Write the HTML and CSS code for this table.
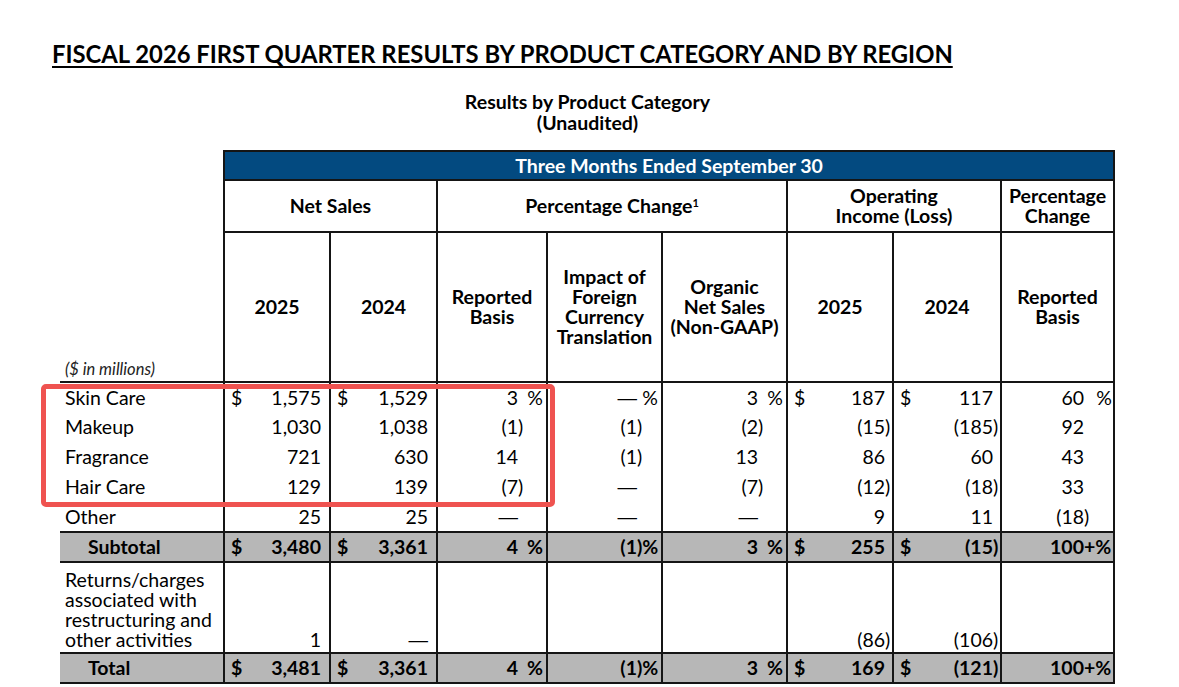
FILE: index.html
```html
<!DOCTYPE html>
<html lang="en">
<head>
<meta charset="utf-8">
<title>Fiscal 2026 First Quarter Results</title>
<link rel="stylesheet" href="styles.css">
</head>
<body>
<div class="page">
  <h1 class="title">FISCAL 2026 FIRST QUARTER RESULTS BY PRODUCT CATEGORY AND BY REGION</h1>
  <div class="report">
    <div class="subtitle">Results by Product Category<br>(Unaudited)</div>
    <table class="results">
      <colgroup>
        <col class="c-label"><col class="c-ns"><col class="c-ns2"><col class="c-rep"><col class="c-fx"><col class="c-org"><col class="c-oi"><col class="c-oi2"><col class="c-pct">
      </colgroup>
      <thead>
        <tr class="band">
          <th class="lbl"></th>
          <th colspan="8" class="band-cell">Three Months Ended September 30</th>
        </tr>
        <tr class="grp">
          <th class="lbl"></th>
          <th colspan="2">Net Sales</th>
          <th colspan="3">Percentage Change<sup>1</sup></th>
          <th colspan="2">Operating<br>Income (Loss)</th>
          <th>Percentage<br>Change</th>
        </tr>
        <tr class="sub">
          <th class="lbl unit">($ in millions)</th>
          <th>2025</th>
          <th>2024</th>
          <th>Reported<br>Basis</th>
          <th>Impact of<br>Foreign<br>Currency<br>Translation</th>
          <th>Organic<br>Net Sales<br>(Non-GAAP)</th>
          <th>2025</th>
          <th>2024</th>
          <th>Reported<br>Basis</th>
        </tr>
      </thead>
      <tbody>
        <tr class="row">
          <td class="lbl">Skin Care</td>
          <td class="n w8"><span class="cur">$</span>1,575<span class="s"></span></td>
          <td class="n w8"><span class="cur">$</span>1,529<span class="s"></span></td>
          <td class="n w29">3<span class="s r">%</span></td>
          <td class="n w25"><span class="d">—</span><span class="s r">%</span></td>
          <td class="n w29">3<span class="s r">%</span></td>
          <td class="n w9"><span class="cur">$</span>187<span class="s"></span></td>
          <td class="n w9"><span class="cur">$</span>117<span class="s"></span></td>
          <td class="n w30">60<span class="s r">%</span></td>
        </tr>
        <tr class="row">
          <td class="lbl">Makeup</td>
          <td class="n w8">1,030<span class="s"></span></td>
          <td class="n w8">1,038<span class="s"></span></td>
          <td class="n w29">(1<span class="s">)</span></td>
          <td class="n w25">(1<span class="s">)</span></td>
          <td class="n w29">(2<span class="s">)</span></td>
          <td class="n w9">(15<span class="s">)</span></td>
          <td class="n w9">(185<span class="s">)</span></td>
          <td class="n w30">92<span class="s"></span></td>
        </tr>
        <tr class="row">
          <td class="lbl">Fragrance</td>
          <td class="n w8">721<span class="s"></span></td>
          <td class="n w8">630<span class="s"></span></td>
          <td class="n w29">14<span class="s"></span></td>
          <td class="n w25">(1<span class="s">)</span></td>
          <td class="n w29">13<span class="s"></span></td>
          <td class="n w9">86<span class="s"></span></td>
          <td class="n w9">60<span class="s"></span></td>
          <td class="n w30">43<span class="s"></span></td>
        </tr>
        <tr class="row">
          <td class="lbl">Hair Care</td>
          <td class="n w8">129<span class="s"></span></td>
          <td class="n w8">139<span class="s"></span></td>
          <td class="n w29">(7<span class="s">)</span></td>
          <td class="n w25"><span class="d">—</span><span class="s"></span></td>
          <td class="n w29">(7<span class="s">)</span></td>
          <td class="n w9">(12<span class="s">)</span></td>
          <td class="n w9">(18<span class="s">)</span></td>
          <td class="n w30">33<span class="s"></span></td>
        </tr>
        <tr class="row">
          <td class="lbl">Other</td>
          <td class="n w8">25<span class="s"></span></td>
          <td class="n w8">25<span class="s"></span></td>
          <td class="n w29"><span class="d">—</span><span class="s"></span></td>
          <td class="n w25"><span class="d">—</span><span class="s"></span></td>
          <td class="n w29"><span class="d">—</span><span class="s"></span></td>
          <td class="n w9">9<span class="s"></span></td>
          <td class="n w9">11<span class="s"></span></td>
          <td class="n w30">(18<span class="s">)</span></td>
        </tr>
        <tr class="tot">
          <td class="lbl">Subtotal</td>
          <td class="n w8"><span class="cur">$</span>3,480<span class="s"></span></td>
          <td class="n w8"><span class="cur">$</span>3,361<span class="s"></span></td>
          <td class="n w29">4<span class="s r">%</span></td>
          <td class="n w25">(1<span class="s">)%</span></td>
          <td class="n w29">3<span class="s r">%</span></td>
          <td class="n w9"><span class="cur">$</span>255<span class="s"></span></td>
          <td class="n w9"><span class="cur">$</span>(15<span class="s">)</span></td>
          <td class="n w30">100<span class="s">+%</span></td>
        </tr>
        <tr class="ret">
          <td class="lbl"><div class="ret-label">Returns/charges<br>associated with<br>restructuring and<br>other activities</div></td>
          <td class="n w8">1<span class="s"></span></td>
          <td class="n w8"><span class="d">—</span><span class="s"></span></td>
          <td class="n w29"></td>
          <td class="n w25"></td>
          <td class="n w29"></td>
          <td class="n w9">(86<span class="s">)</span></td>
          <td class="n w9">(106<span class="s">)</span></td>
          <td class="n w30"></td>
        </tr>
        <tr class="tot">
          <td class="lbl">Total</td>
          <td class="n w8"><span class="cur">$</span>3,481<span class="s"></span></td>
          <td class="n w8"><span class="cur">$</span>3,361<span class="s"></span></td>
          <td class="n w29">4<span class="s r">%</span></td>
          <td class="n w25">(1<span class="s">)%</span></td>
          <td class="n w29">3<span class="s r">%</span></td>
          <td class="n w9"><span class="cur">$</span>169<span class="s"></span></td>
          <td class="n w9"><span class="cur">$</span>(121<span class="s">)</span></td>
          <td class="n w30">100<span class="s">+%</span></td>
        </tr>
      </tbody>
    </table>
    <div class="highlight"></div>
  </div>
</div>
</body>
</html>
```

FILE: styles.css
```css
* { box-sizing: border-box; }

body {
  margin: 0;
  background: #fff;
  color: #000;
  font-family: Lato, "Open Sans", "Liberation Sans", sans-serif;
}

.page {
  padding: 40px 0 0 52px;
}

.title {
  margin: 0;
  font-size: 23.8px;
  line-height: 28px;
  font-weight: 700;
  text-decoration: underline;
  text-decoration-thickness: 2px;
  text-underline-offset: 3px;
  white-space: nowrap;
}

.report {
  position: relative;
  margin-left: 8px;
  width: 1055px;
}

.subtitle {
  margin-top: 23px;
  text-align: center;
  font-size: 19.5px;
  line-height: 21px;
  font-weight: 700;
}

.results {
  margin-top: 17px;
  border-collapse: collapse;
  table-layout: fixed;
  width: 1055px;
  font-size: 19.5px;
}

.c-label { width: 164px; }
.c-ns { width: 106px; }
.c-ns2 { width: 107px; }
.c-rep { width: 110px; }
.c-fx { width: 115px; }
.c-org { width: 125px; }
.c-oi { width: 106px; }
.c-oi2 { width: 108px; }
.c-pct { width: 113px; }

.results th,
.results td {
  padding: 0;
  border: 2px solid #151515;
}

.results th {
  font-weight: 700;
  text-align: center;
  line-height: 20px;
}

.results .lbl {
  border-left: none;
  border-top: none;
  border-bottom: none;
  text-align: left;
  padding-left: 5px;
  font-weight: 400;
  white-space: nowrap;
}

.band th { height: 29px; }
.band .band-cell {
  background: #034a80;
  color: #fff;
  line-height: 22px;
  padding-top: 1px;
}

.grp th { height: 52px; }
.grp sup {
  font-size: 11px;
  vertical-align: 6px;
  line-height: 0;
}

.sub th { height: 150px; }
.sub .unit {
  vertical-align: bottom;
  font-style: italic;
  font-size: 16.5px;
  color: #222;
  padding-bottom: 2px;
  border-bottom: 2px solid #151515;
}

.results td {
  line-height: 22px;
  border-top: none;
  border-bottom: none;
  white-space: nowrap;
}

.row td { height: 30px; }

.n {
  text-align: right;
}

.d {
  font-family: "Liberation Sans", sans-serif;
  font-weight: 400;
}

.cur {
  float: left;
  padding-left: 6px;
}

.s {
  display: inline-block;
  text-align: left;
}
.s.r { text-align: right; padding-right: 3px; }

.w8 .s { width: 8px; }
.w9 .s { width: 7px; }
.w25 .s { width: 24px; }
.w29 .s { width: 28px; }
.w30 .s { width: 29px; }
.w30 .s.r { padding-right: 1px; }

.tot td {
  height: 30px;
  background: #b7b7b7;
  font-weight: 700;
  border-top: 2px solid #151515;
  border-bottom: 2px solid #151515;
}
.tot .lbl {
  padding-left: 28px;
  font-weight: 700;
  border-top: 2px solid #151515;
  border-bottom: 2px solid #151515;
}

.ret td {
  height: 91px;
  vertical-align: bottom;
  line-height: 20px;
  padding-bottom: 2px;
}

.ret-label {
  line-height: 20px;
}

.highlight {
  position: absolute;
  left: -19px;
  top: 293px;
  width: 514px;
  height: 123px;
  border: 5px solid #ef5350;
  border-radius: 5px;
  pointer-events: none;
}
```
